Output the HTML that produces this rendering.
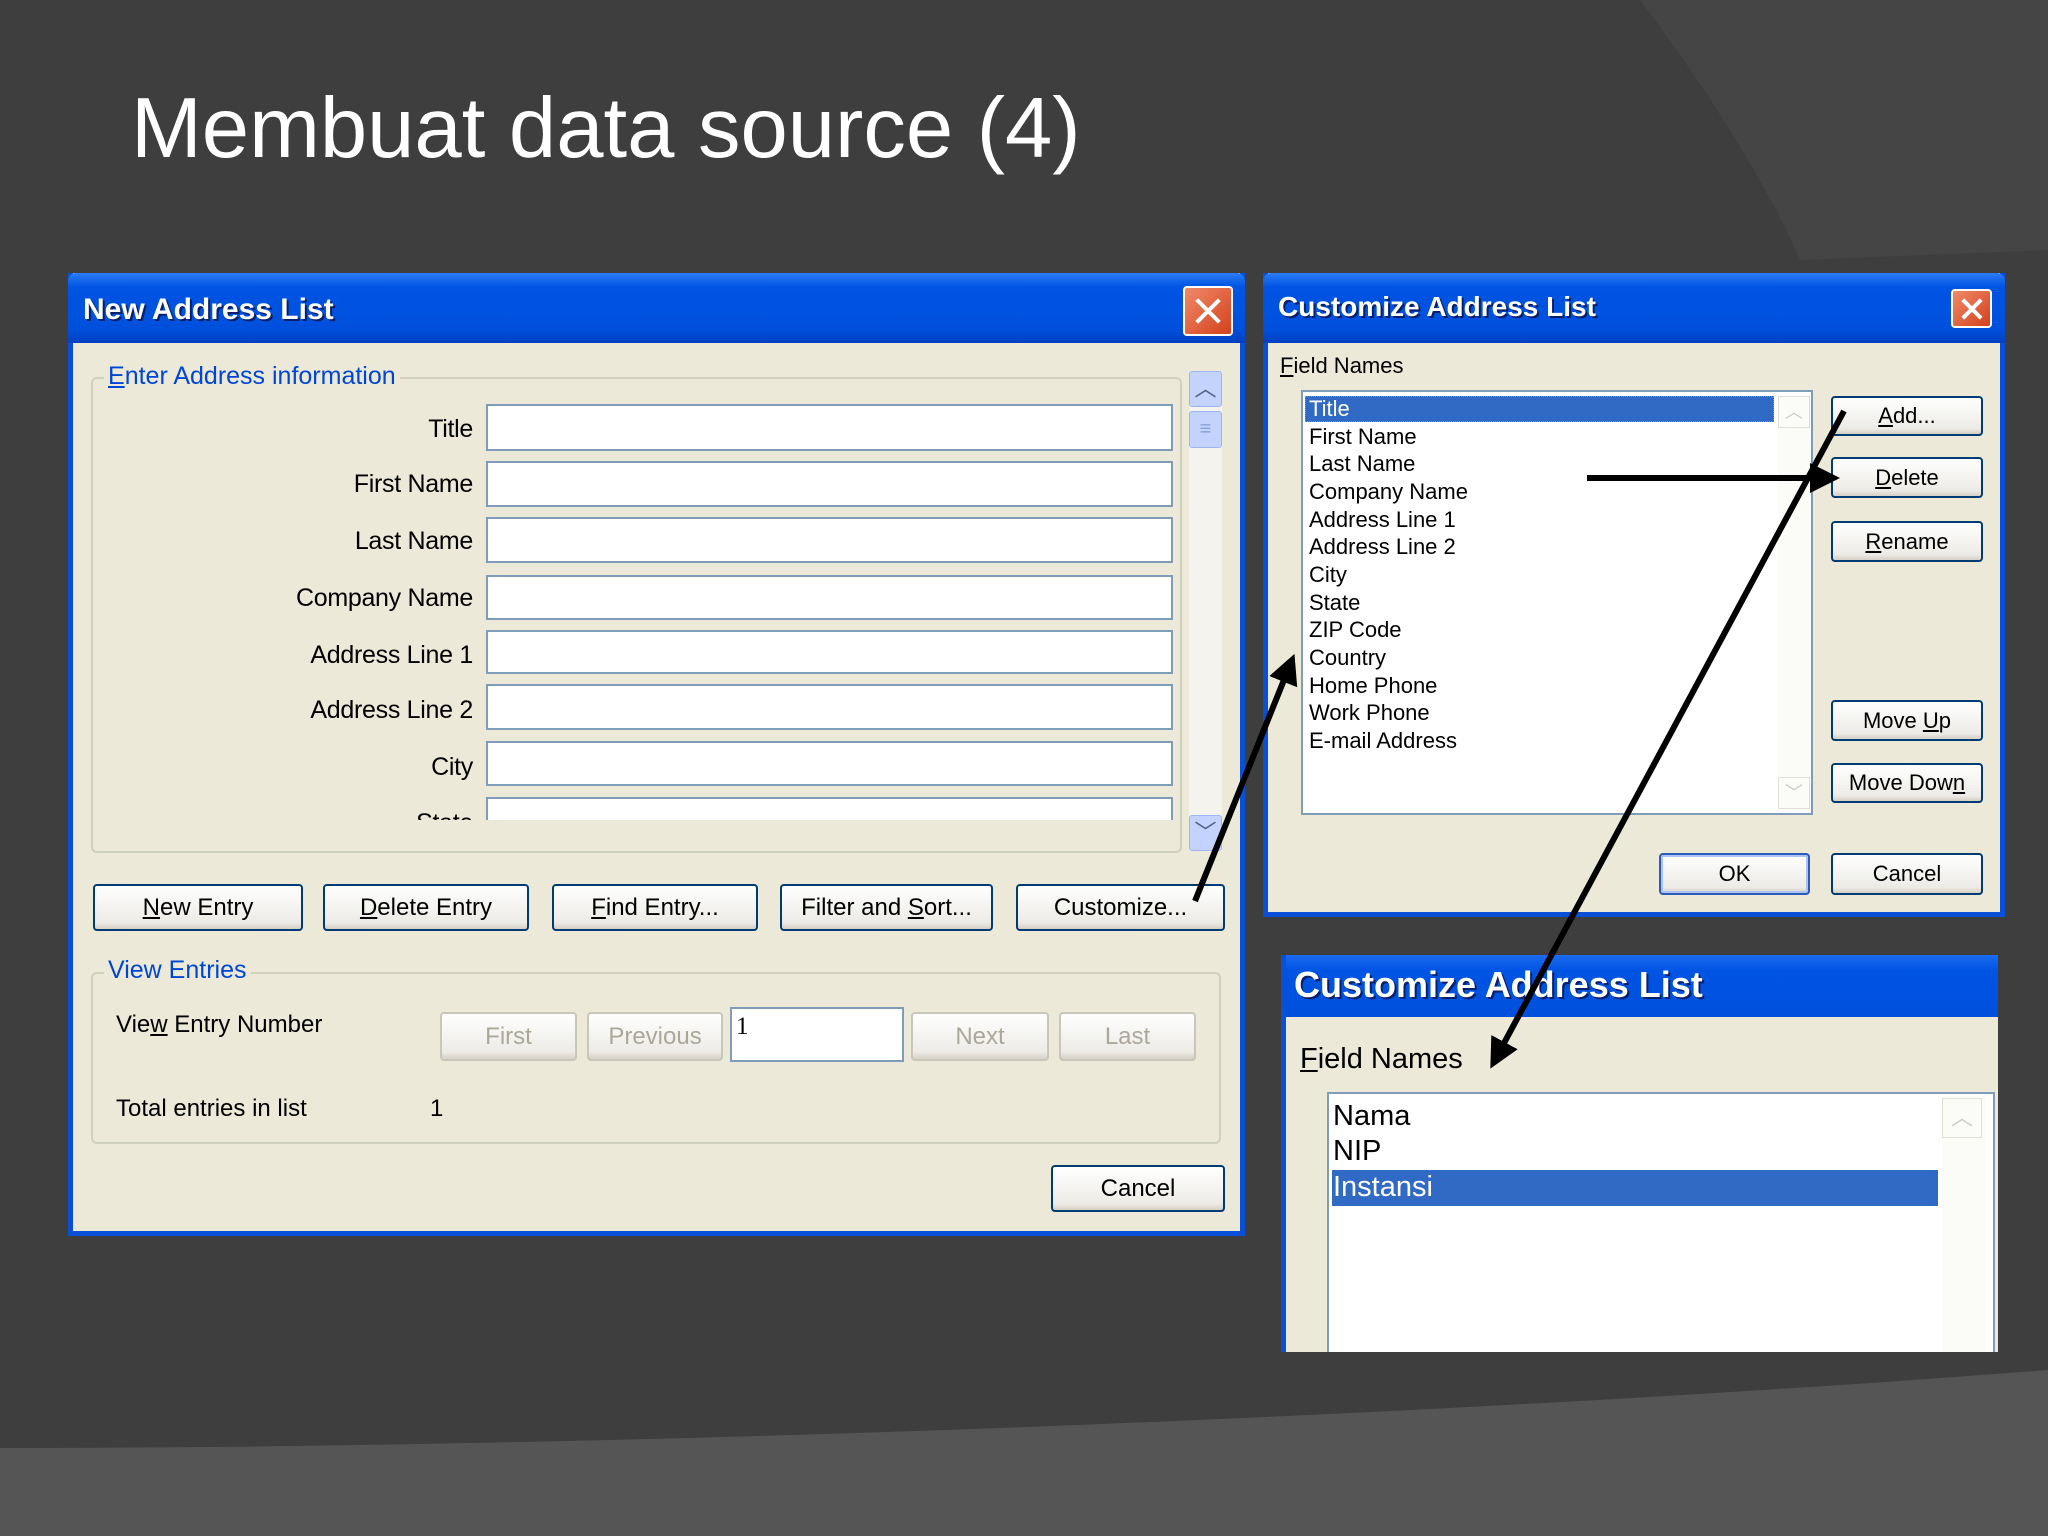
<!DOCTYPE html>
<html><head><meta charset="utf-8"><style>
*{margin:0;padding:0;box-sizing:border-box}
body{width:2048px;height:1536px;overflow:hidden;background:#3e3e3e;font-family:"Liberation Sans","DejaVu Sans",sans-serif;position:relative}
.a{position:absolute}
.dlg{position:absolute;background:#ECE9D8;border:5px solid #0A4FD8;border-top:none}
.tb{position:absolute;left:-5px;right:-5px;top:0;background:linear-gradient(#2a7bf5,#0054E3 20%,#0050dd 80%,#0040c0);color:#fff;font-weight:bold;text-shadow:2px 2px 0 #0a1f6a;border-radius:8px 8px 0 0}
.cls{position:absolute;background:linear-gradient(135deg,#f08a6a,#d4411b);border:2px solid #fff;border-radius:4px}
.cls:before,.cls:after{content:"";position:absolute;left:50%;top:50%;width:70%;height:4px;background:#fff;margin-left:-35%;margin-top:-2px;transform:rotate(45deg)}
.cls:after{transform:rotate(-45deg)}
.lbl{position:absolute;font-size:25px;color:#000;text-align:right;width:300px;letter-spacing:-0.3px}
.inp{position:absolute;background:#fff;border:2px solid #7f9db9}
.btn{position:absolute;background:linear-gradient(#fff,#ecebe6 85%,#d6d0c5);border:2px solid #003c74;border-radius:4px;font-size:24px;text-align:center;color:#000}
.dis{color:#aca899;border-color:#c9c7ba}
.grp{position:absolute;border:2px solid #d0d0bf;border-radius:6px}
.glab{position:absolute;background:#ECE9D8;color:#0046d5;font-size:25px;padding:0 4px}
.li{position:absolute;font-size:22px;color:#000;left:6px;height:28px;line-height:28px}
</style></head><body>
<svg class="a" style="left:0;top:0" width="2048" height="1536">
<path d="M1640 0 C1700 80 1760 170 1800 260 L2048 250 L2048 0 Z" fill="#454545"/>
<path d="M0 1448 C600 1448 1400 1420 2048 1370 L2048 1536 L0 1536 Z" fill="#555"/>
</svg>
<div class="a" style="left:131px;top:80px;font-size:85px;color:#fff">Membuat data source (4)</div>

<!-- Dialog 1 -->
<div class="dlg" style="left:68px;top:273px;width:1177px;height:963px">
<div class="tb" style="height:70px;font-size:30px;padding:20px 0 0 15px">New Address List</div>
<div class="cls" style="left:1110px;top:13px;width:50px;height:50px"></div>
<div class="grp" style="left:18px;top:104px;width:1091px;height:476px"></div>
<div class="glab" style="left:31px;top:89px"><u>E</u>nter Address information</div>
<div class="lbl" style="left:100px;top:142px">Title</div><div class="inp" style="left:413px;top:131px;width:687px;height:47px"></div>
<div class="lbl" style="left:100px;top:197px">First Name</div><div class="inp" style="left:413px;top:188px;width:687px;height:46px"></div>
<div class="lbl" style="left:100px;top:254px">Last Name</div><div class="inp" style="left:413px;top:244px;width:687px;height:46px"></div>
<div class="lbl" style="left:100px;top:311px">Company Name</div><div class="inp" style="left:413px;top:302px;width:687px;height:45px"></div>
<div class="lbl" style="left:100px;top:368px">Address Line 1</div><div class="inp" style="left:413px;top:357px;width:687px;height:44px"></div>
<div class="lbl" style="left:100px;top:423px">Address Line 2</div><div class="inp" style="left:413px;top:411px;width:687px;height:46px"></div>
<div class="lbl" style="left:100px;top:480px">City</div><div class="inp" style="left:413px;top:468px;width:687px;height:45px"></div>
<div class="a" style="left:100px;top:520px;width:1010px;height:27px;overflow:hidden"><div class="lbl" style="left:0px;top:16px">State</div><div class="inp" style="left:313px;top:4px;width:687px;height:45px"></div></div>
<div class="a" style="left:1116px;top:98px;width:33px;height:480px;background:#f4f3ee"></div>
<div class="a" style="left:1116px;top:98px;width:33px;height:36px;background:#c3d3fd;border:1px solid #9cb6f5;border-radius:3px;color:#4d6185;font-size:22px;text-align:center;line-height:34px">︿</div>
<div class="a" style="left:1116px;top:138px;width:33px;height:37px;background:#c3d3fd;border:1px solid #9cb6f5;border-radius:3px;color:#8aa0d8;font-size:20px;text-align:center;line-height:34px">≡</div>
<div class="a" style="left:1116px;top:542px;width:33px;height:36px;background:#c3d3fd;border:1px solid #9cb6f5;border-radius:3px;color:#4d6185;font-size:22px;text-align:center;line-height:34px">﹀</div>
<div class="btn" style="left:20px;top:611px;width:210px;height:47px;line-height:43px"><u>N</u>ew Entry</div>
<div class="btn" style="left:250px;top:611px;width:206px;height:47px;line-height:43px"><u>D</u>elete Entry</div>
<div class="btn" style="left:479px;top:611px;width:206px;height:47px;line-height:43px"><u>F</u>ind Entry...</div>
<div class="btn" style="left:707px;top:611px;width:213px;height:47px;line-height:43px">Filter and <u>S</u>ort...</div>
<div class="btn" style="left:943px;top:611px;width:209px;height:47px;line-height:43px">Customize...</div>
<div class="grp" style="left:18px;top:699px;width:1130px;height:172px"></div>
<div class="glab" style="left:31px;top:683px">View Entries</div>
<div class="a" style="left:43px;top:738px;font-size:24px">Vie<u>w</u> Entry Number</div>
<div class="btn dis" style="left:367px;top:739px;width:137px;height:49px;line-height:45px">First</div>
<div class="btn dis" style="left:514px;top:739px;width:136px;height:49px;line-height:45px">Previous</div>
<div class="inp" style="left:657px;top:734px;width:174px;height:55px;font-size:25px;padding:4px 4px;font-family:'Liberation Serif',serif">1</div>
<div class="btn dis" style="left:838px;top:739px;width:138px;height:49px;line-height:45px">Next</div>
<div class="btn dis" style="left:986px;top:739px;width:137px;height:49px;line-height:45px">Last</div>
<div class="a" style="left:43px;top:822px;font-size:24px">Total entries in list</div>
<div class="a" style="left:357px;top:822px;font-size:24px">1</div>
<div class="btn" style="left:978px;top:892px;width:174px;height:47px;line-height:43px">Cancel</div>
</div>

<!-- Dialog 2 -->
<div class="dlg" style="left:1263px;top:273px;width:742px;height:644px">
<div class="tb" style="height:70px;font-size:28px;padding:18px 0 0 15px">Customize Address List</div>
<div class="cls" style="left:683px;top:16px;width:41px;height:39px"></div>
<div class="a" style="left:12px;top:80px;font-size:22px"><u>F</u>ield Names</div>
<div class="a" style="left:33px;top:117px;width:512px;height:425px;background:#fff;border:2px solid #7f9db9">
<div class="a" style="left:2px;top:4px;width:469px;height:26px;background:#316AC5;border:1px dotted #c08a30"></div>
<div class="li" style="top:3px;color:#fff">Title</div>
<div class="li" style="top:31px">First Name</div>
<div class="li" style="top:58px">Last Name</div>
<div class="li" style="top:86px">Company Name</div>
<div class="li" style="top:114px">Address Line 1</div>
<div class="li" style="top:141px">Address Line 2</div>
<div class="li" style="top:169px">City</div>
<div class="li" style="top:197px">State</div>
<div class="li" style="top:224px">ZIP Code</div>
<div class="li" style="top:252px">Country</div>
<div class="li" style="top:280px">Home Phone</div>
<div class="li" style="top:307px">Work Phone</div>
<div class="li" style="top:335px">E-mail Address</div>
<div class="a" style="left:475px;top:4px;width:32px;height:413px;background:#fbfbf8"></div>
<div class="a" style="left:475px;top:4px;width:32px;height:32px;border:1px solid #e0dfd8;color:#ccc;text-align:center;font-size:18px;line-height:30px">︿</div>
<div class="a" style="left:475px;top:385px;width:32px;height:32px;border:1px solid #e0dfd8;color:#ccc;text-align:center;font-size:18px;line-height:30px">﹀</div>
</div>
<div class="btn" style="left:563px;top:123px;width:152px;height:40px;font-size:22px;line-height:36px"><u>A</u>dd...</div>
<div class="btn" style="left:563px;top:184px;width:152px;height:41px;font-size:22px;line-height:37px"><u>D</u>elete</div>
<div class="btn" style="left:563px;top:248px;width:152px;height:41px;font-size:22px;line-height:37px"><u>R</u>ename</div>
<div class="btn" style="left:563px;top:427px;width:152px;height:41px;font-size:22px;line-height:37px">Move <u>U</u>p</div>
<div class="btn" style="left:563px;top:490px;width:152px;height:40px;font-size:22px;line-height:36px">Move Dow<u>n</u></div>
<div class="btn" style="left:391px;top:580px;width:151px;height:42px;font-size:22px;line-height:38px;border-color:#2f5bb8;box-shadow:inset 0 0 0 2px #a9c4f5">OK</div>
<div class="btn" style="left:563px;top:580px;width:152px;height:42px;font-size:22px;line-height:38px">Cancel</div>
</div>

<!-- Dialog 3 cropped -->
<div class="a" style="left:1281px;top:955px;width:717px;height:397px;background:#ECE9D8;border-left:5px solid #0A4FD8;overflow:hidden">
<div class="a" style="left:-5px;right:0;top:0;height:62px;background:linear-gradient(#1c6cf0,#0054E3 25%,#0050dd);color:#fff;font-weight:bold;font-size:36px;padding:9px 0 0 13px;text-shadow:2px 2px 0 #0a1f6a">Customize Address List</div>
<div class="a" style="left:14px;top:88px;font-size:29px"><u>F</u>ield Names</div>
<div class="a" style="left:41px;top:137px;width:668px;height:270px;background:#fff;border:2px solid #7f9db9">
<div class="a" style="left:4px;top:6px;font-size:29px">Nama</div>
<div class="a" style="left:4px;top:41px;font-size:29px">NIP</div>
<div class="a" style="left:3px;top:76px;width:606px;height:36px;background:#316AC5"></div>
<div class="a" style="left:4px;top:77px;font-size:29px;color:#fff">Instansi</div>
<div class="a" style="left:613px;top:2px;width:44px;height:270px;background:#fbfbf8"></div>
<div class="a" style="left:613px;top:4px;width:40px;height:40px;border:1px solid #e0dfd8;color:#ccc;text-align:center;font-size:22px;line-height:38px">︿</div>
</div>
</div>

<svg class="a" style="left:0;top:0" width="2048" height="1536">
<defs><marker id="m" markerWidth="5" markerHeight="5" refX="3" refY="2.5" orient="auto"><path d="M0 0 L5 2.5 L0 5 Z" fill="#000"/></marker></defs>
<g stroke="#000" stroke-width="6" fill="none" marker-end="url(#m)">
<line x1="1195" y1="901" x2="1290" y2="665"/>
<line x1="1587" y1="478" x2="1828" y2="478"/>
<line x1="1844" y1="411" x2="1496" y2="1058"/>
</g></svg>
</body></html>
